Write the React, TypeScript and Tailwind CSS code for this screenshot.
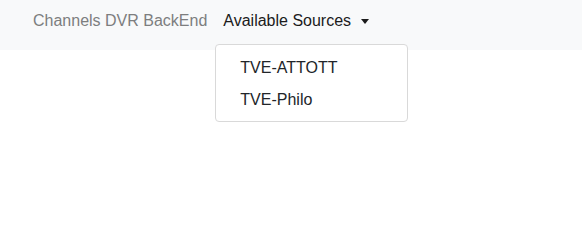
import { useState } from "react";

const SOURCES = ["TVE-ATTOTT", "TVE-Philo"];

function SourcesDropdown() {
  const [open, setOpen] = useState(true);

  return (
    <div className="relative">
      <button
        type="button"
        onClick={() => setOpen((v) => !v)}
        className="flex items-center px-2 text-[16px] leading-6 text-[#1b1b1b]"
      >
        Available Sources
        <span className="ml-[10px] mt-[1px] inline-block h-0 w-0 border-x-[4px] border-t-[5px] border-x-transparent border-t-[#1b1b1b]" />
      </button>
      {open ? (
        <ul className="absolute left-0 top-[35px] z-10 w-[193px] rounded border border-[#d9d9d9] bg-white pb-[5px] pt-[7px]">
          {SOURCES.map((source) => (
            <li key={source}>
              <a href="#" className="block px-6 py-1 text-[16px] leading-6 text-[#212529]">
                {source}
              </a>
            </li>
          ))}
        </ul>
      ) : null}
    </div>
  );
}

export default function App() {
  return (
    <div className="h-[209px] bg-white font-['Liberation_Sans',Arial,sans-serif]">
      <nav className="flex h-[50px] items-start bg-[#f8f9fa] pl-[33px] pt-[9px]">
        <a href="#" className="mr-2 text-[16px] leading-6 text-[#7d7e7f]">
          Channels DVR BackEnd
        </a>
        <SourcesDropdown />
      </nav>
    </div>
  );
}
